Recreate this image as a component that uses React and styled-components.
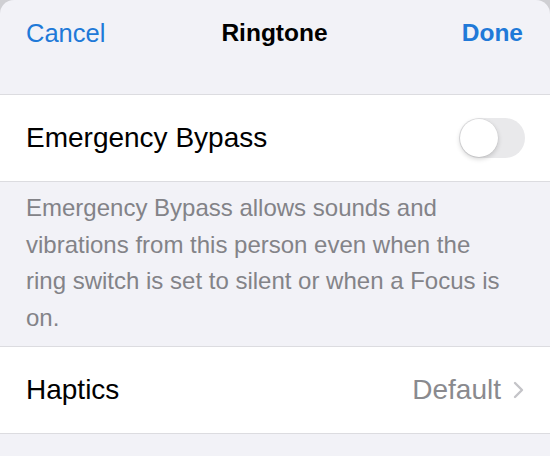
import React from "react";
import styled, { createGlobalStyle } from "styled-components";

const GlobalStyle = createGlobalStyle`
  html, body {
    margin: 0;
    padding: 0;
    background: #cfcfd3;
  }
  body {
    font-family: "Liberation Sans", Arial, sans-serif;
    -webkit-font-smoothing: antialiased;
  }
`;

const Sheet = styled.div`
  background: #f2f2f7;
  border-radius: 14px 14px 0 0;
  min-height: 456px;
  overflow: hidden;
`;

const NavBar = styled.header`
  display: grid;
  grid-template-columns: 1fr auto 1fr;
  align-items: center;
  height: 66px;
  padding: 0 27px 0 26px;
  margin-bottom: 28px;
`;

const NavButton = styled.span`
  color: #2079d8;
  font-size: ${(p) => (p.$bold ? "24.5px" : "25.5px")};
  font-weight: ${(p) => (p.$bold ? 700 : 400)};
  justify-self: ${(p) => (p.$end ? "end" : "start")};
`;

const Title = styled.h1`
  margin: 0;
  font-size: 24.5px;
  font-weight: 700;
  color: #000;
`;

const Group = styled.section`
  background: #fff;
  border-top: 1px solid #dcdce0;
  border-bottom: 1px solid #dcdce0;
`;

const Row = styled.div`
  display: flex;
  align-items: center;
  justify-content: space-between;
  height: 86px;
  padding: 0 25px 0 26px;
`;

const Label = styled.span`
  font-size: 28px;
  color: #000;
`;

const Detail = styled.span`
  display: flex;
  align-items: center;
  gap: 12px;
  font-size: 28px;
  color: #8a8a8e;
  padding-right: 1px;
`;

const Track = styled.div`
  position: relative;
  width: 66px;
  height: 40px;
  border-radius: 20px;
  background: #e9e9eb;
`;

const Knob = styled.div`
  position: absolute;
  top: 1px;
  left: 1px;
  width: 38px;
  height: 38px;
  border-radius: 50%;
  background: #fff;
  box-shadow: 0 2px 5px rgba(0, 0, 0, 0.18), 0 0 0 0.5px rgba(0, 0, 0, 0.06);
`;

const Footnote = styled.p`
  margin: 0;
  padding: 8px 26px 10px 26px;
  font-size: 24px;
  line-height: 36.5px;
  color: #838388;
  white-space: nowrap;
`;

const Chevron = () => (
  <svg width="11" height="18" viewBox="0 0 11 18" fill="none">
    <polyline
      points="2,2 9,9 2,16"
      stroke="#c4c4c8"
      strokeWidth="2.4"
      strokeLinecap="round"
      strokeLinejoin="round"
    />
  </svg>
);

export default function App() {
  return (
    <>
      <GlobalStyle />
      <Sheet>
        <NavBar>
          <NavButton>Cancel</NavButton>
          <Title>Ringtone</Title>
          <NavButton $bold $end>
            Done
          </NavButton>
        </NavBar>
        <Group>
          <Row>
            <Label>Emergency Bypass</Label>
            <Track>
              <Knob />
            </Track>
          </Row>
        </Group>
        <Footnote>
          Emergency Bypass allows sounds and
          <br />
          vibrations from this person even when the
          <br />
          ring switch is set to silent or when a Focus is
          <br />
          on.
        </Footnote>
        <Group>
          <Row>
            <Label>Haptics</Label>
            <Detail>
              Default
              <Chevron />
            </Detail>
          </Row>
        </Group>
      </Sheet>
    </>
  );
}
